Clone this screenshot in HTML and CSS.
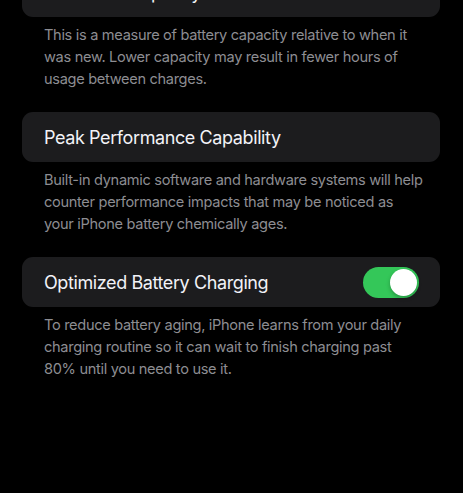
FILE: index.html
```html
<!DOCTYPE html>
<html>
<head>
<meta charset="utf-8">
<link rel="stylesheet" href="styles.css">
</head>
<body>
<div class="list">
  <div class="card card-first"><span class="title">Maximum Capacity</span></div>
  <p class="desc">This is a measure of battery capacity relative to when it was new. Lower capacity may result in fewer hours of usage between charges.</p>
  <div class="card"><span class="title">Peak Performance Capability</span></div>
  <p class="desc">Built-in dynamic software and hardware systems will help counter performance impacts that may be noticed as your iPhone battery chemically ages.</p>
  <div class="card"><span class="title">Optimized Battery Charging</span><span class="toggle"><span class="knob"></span></span></div>
  <p class="desc">To reduce battery aging, iPhone learns from your daily charging routine so it can wait to finish charging past 80% until you need to use it.</p>
</div>
</body>
</html>
```

FILE: styles.css
```css
html, body {
  margin: 0;
  padding: 0;
  background: #000;
  height: 100%;
  overflow: hidden;
}
body {
  font-family: Inter, "Noto Sans", sans-serif;
  -webkit-font-smoothing: antialiased;
}
.list {
  padding: 0 23px 0 22px;
  display: flex;
  flex-direction: column;
}
.card {
  height: 50px;
  background: #1c1c1e;
  border-radius: 11px;
  display: flex;
  align-items: center;
  justify-content: space-between;
  padding: 1px 21px 0 22px;
  box-sizing: border-box;
}
.card-first {
  margin-top: -33px;
}
.title {
  color: #f2f2f7;
  font-size: 18px;
  letter-spacing: -0.4px;
}
.desc {
  margin: 0;
  padding: 7px 14px 22px 22px;
  color: #8d8d92;
  font-size: 14.6px;
  line-height: 22px;
  letter-spacing: -0.32px;
}
.toggle {
  width: 56px;
  height: 31px;
  border-radius: 16px;
  background: #34c759;
  display: flex;
  align-items: center;
  justify-content: flex-end;
  padding: 0 2px;
  box-sizing: border-box;
}
.knob {
  width: 27px;
  height: 27px;
  border-radius: 50%;
  background: #fff;
  box-shadow: 0 2px 4px rgba(0,0,0,0.25);
}
```
